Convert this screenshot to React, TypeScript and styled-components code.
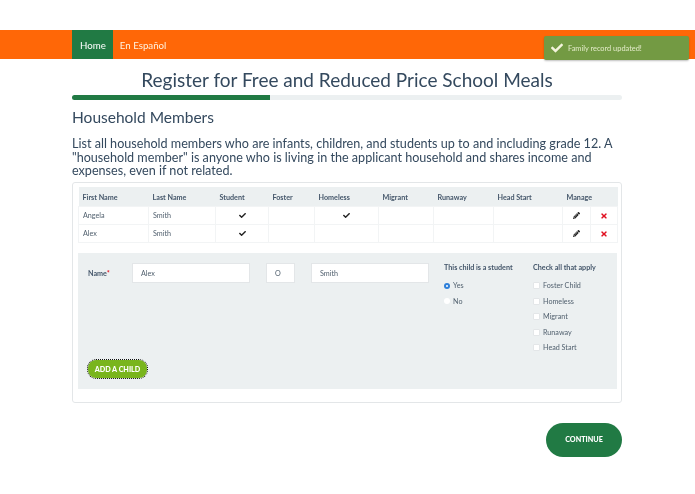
import styled, { createGlobalStyle } from 'styled-components';
import { FaCheck, FaPencilAlt, FaTimes } from 'react-icons/fa';

const GlobalStyle = createGlobalStyle`
  body {
    margin: 0;
    background: #fff;
    font-family: Lato, "Open Sans", sans-serif;
    color: #34495e;
  }
`;

const Page = styled.div`
  position: relative;
  width: 695px;
  height: 494px;
  padding-top: 30px;
  box-sizing: border-box;
  overflow: hidden;
  will-change: transform;
`;

const NavBar = styled.nav`
  height: 29px;
  background: #ff6707;
  padding-left: 72px;
  display: flex;
`;

const NavLink = styled.a<{ $active?: boolean }>`
  display: flex;
  align-items: center;
  padding: ${(p) => (p.$active ? '0 7px 0 8px' : '0 8px 0 7px')};
  font-size: 9.7px;
  color: ${(p) => (p.$active ? '#fff' : '#fff3e0')};
  background: ${(p) => (p.$active ? '#217a44' : 'transparent')};
`;

const Toast = styled.div`
  position: absolute;
  left: 544px;
  top: 36px;
  width: 145px;
  height: 24px;
  background: #739a43;
  box-shadow: 0 1px 2px rgba(0, 0, 0, 0.25);
  border-radius: 2px;
  display: flex;
  align-items: center;
  gap: 5px;
  padding-left: 7px;
  box-sizing: border-box;
  font-size: 7.4px;
  color: #e3ebc9;
`;

const ToastIcon = styled(FaCheck)`
  width: 12px;
  height: 12px;
  color: #f4f4dc;
`;

const Container = styled.main`
  width: 550px;
  margin: 0 0 0 72px;
`;

const Title = styled.h1`
  margin: 8px 0 0;
  height: 28px;
  line-height: 26px;
  font-size: 19px;
  font-weight: 400;
  text-align: center;
`;

const Progress = styled.div`
  height: 5px;
  background: #ecf0f1;
  border-radius: 3px;
  overflow: hidden;
`;

const ProgressFill = styled.div`
  width: 198px;
  height: 100%;
  background: #217a44;
`;

const Heading = styled.h2`
  margin: 7px 0 0;
  height: 20px;
  line-height: 20px;
  font-size: 15.5px;
  font-weight: 400;
`;

const Intro = styled.p`
  margin: 10px 0 0;
  font-size: 12.6px;
  line-height: 13.5px;
`;

const Card = styled.section`
  margin-top: 4px;
  height: 221px;
  box-sizing: border-box;
  border: 1px solid #e3e6e8;
  border-radius: 3px;
  padding: 4px 4px 4px 5px;
`;

const Table = styled.table`
  width: 539px;
  table-layout: fixed;
  border-collapse: collapse;
  font-size: 7.2px;
  line-height: 1;
`;

const HeadCell = styled.th`
  height: 20px;
  box-sizing: border-box;
  padding: 3px 0 0 4px;
  background: #ecf0f1;
  font-weight: 700;
  text-align: left;
  color: #44566a;
`;

const Cell = styled.td<{ $center?: boolean }>`
  height: 17px;
  padding: ${(p) => (p.$center ? '0' : '0 0 0 4px')};
  border: 1px solid #f2f4f5;
  text-align: ${(p) => (p.$center ? 'center' : 'left')};
  color: #52616f;
`;

const CheckMark = styled(FaCheck)`
  display: inline-block;
  width: 7px;
  height: 7px;
  color: #222;
  vertical-align: middle;
`;

const EditIcon = styled(FaPencilAlt)`
  display: inline-block;
  width: 7px;
  height: 7px;
  color: #222;
  vertical-align: middle;
`;

const DeleteIcon = styled(FaTimes)`
  display: inline-block;
  width: 8px;
  height: 8px;
  color: #e01020;
  vertical-align: middle;
`;

const Panel = styled.div`
  margin-top: 10px;
  height: 136px;
  background: #ecf0f1;
  position: relative;
  display: flex;
  padding: 10px 0 0 10px;
  box-sizing: border-box;
`;

const FieldLabel = styled.label`
  width: 44px;
  padding-top: 6px;
  font-size: 7.2px;
  font-weight: 700;
  color: #44566a;
`;

const Required = styled.span`
  color: #e01020;
`;

const TextInput = styled.div<{ $width: number; $gap: number }>`
  width: ${(p) => p.$width}px;
  height: 20px;
  margin-right: ${(p) => p.$gap}px;
  padding-left: 8px;
  box-sizing: border-box;
  background: #fff;
  border: 1px solid #e3e6e8;
  font-size: 7.2px;
  line-height: 19px;
  color: #52616f;
`;

const OptionGroup = styled.div<{ $width: number }>`
  width: ${(p) => p.$width}px;
  display: flex;
  flex-direction: column;
`;

const GroupTitle = styled.div`
  height: 10px;
  line-height: 10px;
  margin-bottom: 5px;
  font-size: 7.2px;
  font-weight: 700;
  color: #44566a;
  white-space: nowrap;
`;

const Option = styled.div`
  height: 15.5px;
  display: flex;
  align-items: center;
  gap: 3px;
  font-size: 7.2px;
  color: #52616f;
`;

const Radio = styled.span<{ $checked?: boolean }>`
  width: 6px;
  height: 6px;
  box-sizing: border-box;
  border-radius: 50%;
  background: ${(p) => (p.$checked ? '#2d7fd9' : '#fff')};
  display: flex;
  align-items: center;
  justify-content: center;
  &::after {
    content: '';
    width: 2px;
    height: 2px;
    border-radius: 50%;
    background: #fff;
    opacity: ${(p) => (p.$checked ? 1 : 0)};
  }
`;

const Checkbox = styled.span`
  width: 7px;
  height: 7px;
  box-sizing: border-box;
  background: #fff;
  border: 1px solid #e3e6e8;
  border-radius: 1px;
`;

const AddButton = styled.button`
  position: absolute;
  left: 10px;
  bottom: 11px;
  width: 59px;
  height: 18px;
  padding: 0;
  border: 0;
  border-radius: 8px;
  background: #79b51d;
  color: #fff;
  font-family: Lato, sans-serif;
  font-size: 7.2px;
  font-weight: 900;
  outline: 1px dotted #111;
  outline-offset: 0;
`;

const Footer = styled.div`
  display: flex;
  justify-content: flex-end;
  margin-top: 20px;
`;

const ContinueButton = styled.button`
  width: 76px;
  height: 34px;
  border: 0;
  border-radius: 17px;
  background: #217a44;
  color: #fff;
  font-family: Lato, sans-serif;
  font-size: 7.2px;
  font-weight: 900;
`;

const columns = [70, 67, 53, 46, 64, 55, 60, 69, 28, 27];
const headers = [
  'First Name',
  'Last Name',
  'Student',
  'Foster',
  'Homeless',
  'Migrant',
  'Runaway',
  'Head Start',
];

const members = [
  { first: 'Angela', last: 'Smith', homeless: true },
  { first: 'Alex', last: 'Smith', homeless: false },
];

const needs = ['Foster Child', 'Homeless', 'Migrant', 'Runaway', 'Head Start'];

export default function App() {
  return (
    <Page>
      <GlobalStyle />
      <NavBar>
        <NavLink $active>Home</NavLink>
        <NavLink>En Español</NavLink>
      </NavBar>
      <Toast>
        <ToastIcon />
        Family record updated!
      </Toast>
      <Container>
        <Title>Register for Free and Reduced Price School Meals</Title>
        <Progress>
          <ProgressFill />
        </Progress>
        <Heading>Household Members</Heading>
        <Intro>
          List all household members who are infants, children, and students up to and including
          grade 12. A "household member" is anyone who is living in the applicant household and
          shares income and expenses, even if not related.
        </Intro>
        <Card>
          <Table>
            <colgroup>
              {columns.map((width, i) => (
                <col key={i} width={width} />
              ))}
            </colgroup>
            <thead>
              <tr>
                {headers.map((label) => (
                  <HeadCell key={label}>{label}</HeadCell>
                ))}
                <HeadCell colSpan={2}>Manage</HeadCell>
              </tr>
            </thead>
            <tbody>
              {members.map((member) => (
                <tr key={member.first}>
                  <Cell>{member.first}</Cell>
                  <Cell>{member.last}</Cell>
                  <Cell $center>
                    <CheckMark />
                  </Cell>
                  <Cell />
                  <Cell $center>{member.homeless && <CheckMark />}</Cell>
                  <Cell />
                  <Cell />
                  <Cell />
                  <Cell $center>
                    <EditIcon />
                  </Cell>
                  <Cell $center>
                    <DeleteIcon />
                  </Cell>
                </tr>
              ))}
            </tbody>
          </Table>
          <Panel>
            <FieldLabel>
              Name<Required>*</Required>
            </FieldLabel>
            <TextInput $width={118} $gap={16}>
              Alex
            </TextInput>
            <TextInput $width={29} $gap={16}>
              O
            </TextInput>
            <TextInput $width={118} $gap={15}>
              Smith
            </TextInput>
            <OptionGroup $width={89}>
              <GroupTitle>This child is a student</GroupTitle>
              <Option>
                <Radio $checked />
                Yes
              </Option>
              <Option>
                <Radio />
                No
              </Option>
            </OptionGroup>
            <OptionGroup $width={80}>
              <GroupTitle>Check all that apply</GroupTitle>
              {needs.map((need) => (
                <Option key={need}>
                  <Checkbox />
                  {need}
                </Option>
              ))}
            </OptionGroup>
            <AddButton>ADD A CHILD</AddButton>
          </Panel>
        </Card>
        <Footer>
          <ContinueButton>CONTINUE</ContinueButton>
        </Footer>
      </Container>
    </Page>
  );
}
